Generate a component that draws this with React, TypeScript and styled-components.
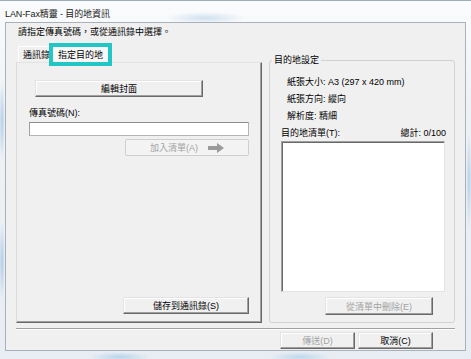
import React from "react";
import styled, { createGlobalStyle } from "styled-components";

const GlobalStyle = createGlobalStyle`
  html, body {
    margin: 0;
    padding: 0;
  }
  body {
    width: 471px;
    height: 359px;
    overflow: hidden;
    font-family: "Liberation Sans", "Noto Sans CJK TC", sans-serif;
    font-size: 9px;
    color: #000;
  }
`;

const Frame = styled.div`
  width: 471px;
  height: 359px;
  box-sizing: border-box;
  display: flex;
  flex-direction: column;
  padding: 0 5px 8px 5px;
  border-top: 1px solid #a3acb5;
  background:
    radial-gradient(ellipse 40px 6px at 205px 17px, rgba(160, 195, 225, 0.45), transparent),
    radial-gradient(ellipse 30px 5px at 120px 356px, rgba(140, 190, 225, 0.5), transparent),
    radial-gradient(ellipse 30px 5px at 300px 356px, rgba(140, 190, 225, 0.45), transparent),
    radial-gradient(ellipse 3px 40px at 2px 120px, rgba(120, 170, 215, 0.5), transparent),
    radial-gradient(ellipse 3px 40px at 2px 260px, rgba(120, 170, 215, 0.5), transparent),
    radial-gradient(ellipse 3px 50px at 469px 180px, rgba(120, 170, 215, 0.45), transparent),
    linear-gradient(180deg, #fafbfc 0%, #eef2f6 30%, #e7edf3 100%);
`;

const TitleBar = styled.div`
  height: 21px;
  box-sizing: border-box;
  padding-top: 3px;
  display: flex;
  align-items: center;
  color: #1a1a1a;
  letter-spacing: -0.1px;
`;

const Client = styled.div`
  height: 329px;
  box-sizing: border-box;
  border: 1px solid #a9b2bb;
  background: #f0f0f0;
  padding-top: 4px;
  display: flex;
  flex-direction: column;
`;

const Hint = styled.div`
  margin-left: 12px;
  line-height: 11px;
`;

const Body = styled.div`
  margin-top: 5px;
  height: 280px;
  padding: 0 10px;
  display: flex;
  gap: 7px;
`;

const LeftColumn = styled.div`
  width: 246px;
  display: flex;
  flex-direction: column;
`;

const TabStrip = styled.div`
  height: 19px;
  flex-shrink: 0;
  padding-left: 2px;
  display: flex;
  align-items: flex-start;
`;

const Tab = styled.div<{ $active?: boolean }>`
  box-sizing: border-box;
  white-space: nowrap;
  ${(p) =>
    p.$active
      ? `
    position: relative;
    z-index: 1;
    width: 63px;
    height: 23px;
    border: 4px solid #22c6c6;
    background: #f8f8f8;
    display: flex;
    align-items: center;
    justify-content: center;
  `
      : `
    margin-top: 3px;
    width: 31px;
    height: 16px;
    line-height: 16px;
    padding-left: 4px;
    overflow: hidden;
    border-top: 1px solid #ffffff;
    border-left: 1px solid #ffffff;
  `}
`;

const TabPanel = styled.div`
  flex: 1;
  box-sizing: border-box;
  display: flex;
  flex-direction: column;
  padding: 17px 12px 8px 12px;
  border-top: 1px solid #e2e2e2;
  border-left: 1px solid #dcdcdc;
  border-right: 1px solid #696969;
  border-bottom: 1px solid #696969;
  box-shadow: inset -1px -1px 0 #a0a0a0;
  background: #f0f0f0;
`;

const Button = styled.div<{
  $width: number;
  $height?: number;
  $disabled?: boolean;
  $flat?: boolean;
}>`
  width: ${(p) => p.$width}px;
  height: ${(p) => p.$height ?? 17}px;
  flex-shrink: 0;
  box-sizing: border-box;
  display: flex;
  align-items: center;
  justify-content: center;
  gap: 10px;
  white-space: nowrap;
  background: #f0f0f0;
  color: ${(p) => (p.$disabled ? "#a3a3a3" : "#000")};
  ${(p) =>
    p.$flat
      ? `
    border: 1px solid #cfcfcf;
    border-radius: 2px;
    background: #f3f3f3;
  `
      : `
    border-style: solid;
    border-width: 1px;
    border-color: #e3e3e3 #696969 #696969 #e3e3e3;
    box-shadow: inset -1px -1px 0 #a0a0a0, inset 1px 1px 0 #ffffff;
  `}
`;

const EditButton = styled(Button)`
  margin-left: 6px;
`;

const RightButton = styled(Button)`
  align-self: flex-end;
`;

const FieldLabel = styled.div`
  margin-top: 10px;
  line-height: 13px;
`;

const TextInput = styled.div`
  margin-top: 2px;
  height: 14px;
  box-sizing: border-box;
  background: #fff;
  border: 1px solid #b5b5b5;
  border-top-color: #8c8c8c;
  border-left-color: #a0a0a0;
`;

const Spacer = styled.div`
  flex: 1;
`;

const GroupBox = styled.div`
  flex: 1;
  margin-top: 17px;
  box-sizing: border-box;
  border: 1px solid #d2d2d2;
  border-radius: 3px;
  padding: 0 9px 7px 11px;
  display: flex;
  flex-direction: column;
`;

const Legend = styled.div`
  align-self: flex-start;
  margin: -6px 0 0 -9px;
  padding: 0 2px;
  line-height: 11px;
  background: #f0f0f0;
`;

const InfoList = styled.div`
  margin: 8px 0 0 6px;
  line-height: 17px;
`;

const ListHeader = styled.div`
  display: flex;
  justify-content: space-between;
  line-height: 16px;
  padding-right: 0;
  margin-right: -1px;
`;

const ListBox = styled.div`
  height: 151px;
  flex-shrink: 0;
  box-sizing: border-box;
  background: #fff;
  border: 1px solid #e3e3e3;
  border-top-color: #a0a0a0;
  border-left-color: #a0a0a0;
  box-shadow: inset 1px 1px 0 #696969;
`;

const Separator = styled.div`
  margin: 5px 10px 0 10px;
  height: 2px;
  box-sizing: border-box;
  border-top: 1px solid #a0a0a0;
  border-bottom: 1px solid #ffffff;
`;

const Footer = styled.div`
  margin-top: 2px;
  padding-right: 32px;
  display: flex;
  justify-content: flex-end;
  gap: 3px;
`;

function ArrowIcon() {
  return (
    <svg width="16" height="10" viewBox="0 0 16 10">
      <path d="M0 3h9V0l7 5-7 5V7H0z" fill="#9a9a9a" />
    </svg>
  );
}

export default function App() {
  return (
    <>
      <GlobalStyle />
      <Frame>
        <TitleBar>LAN-Fax精靈 - 目的地資訊</TitleBar>
        <Client>
          <Hint>請指定傳真號碼，或從通訊錄中選擇。</Hint>
          <Body>
            <LeftColumn>
              <TabStrip>
                <Tab>通訊錄</Tab>
                <Tab $active>指定目的地</Tab>
              </TabStrip>
              <TabPanel>
                <EditButton $width={168}>編輯封面</EditButton>
                <FieldLabel>傳真號碼(N):</FieldLabel>
                <TextInput />
                <RightButton
                  $width={124}
                  $disabled
                  $flat
                  style={{ marginTop: 3 }}
                >
                  <span>加入清單(A)</span>
                  <ArrowIcon />
                </RightButton>
                <Spacer />
                <RightButton $width={126}>儲存到通訊錄(S)</RightButton>
              </TabPanel>
            </LeftColumn>
            <GroupBox>
              <Legend>目的地設定</Legend>
              <InfoList>
                <div>紙張大小: A3 (297 x 420 mm)</div>
                <div>紙張方向: 縱向</div>
                <div>解析度: 精細</div>
              </InfoList>
              <ListHeader>
                <span>目的地清單(T):</span>
                <span>總計: 0/100</span>
              </ListHeader>
              <ListBox />
              <RightButton
                $width={108}
                $height={18}
                $disabled
                style={{ marginTop: 5, marginRight: 12 }}
              >
                從清單中刪除(E)
              </RightButton>
            </GroupBox>
          </Body>
          <Separator />
          <Footer>
            <Button $width={75} $disabled>
              傳送(D)
            </Button>
            <Button $width={75}>取消(C)</Button>
          </Footer>
        </Client>
      </Frame>
    </>
  );
}
